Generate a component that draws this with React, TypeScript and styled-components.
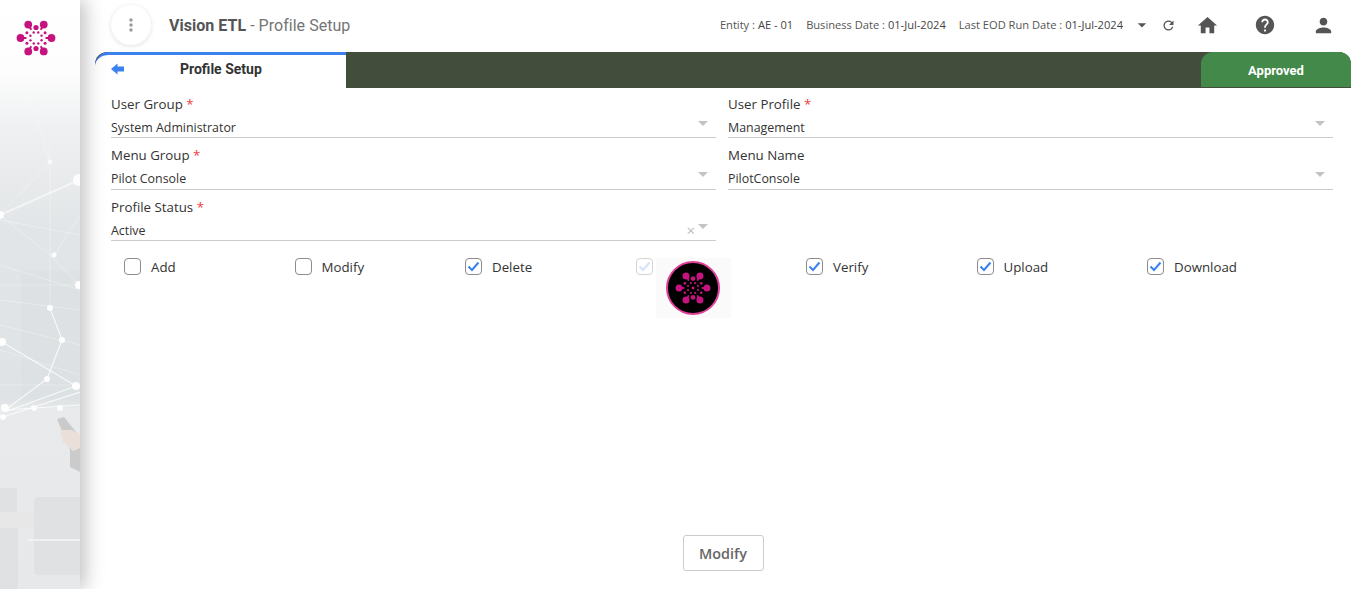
import React from 'react';
import styled, { createGlobalStyle } from 'styled-components';
import { MdHome, MdHelp, MdPerson, MdRefresh, MdMoreVert, MdArrowDropDown } from 'react-icons/md';

const GlobalStyle = createGlobalStyle`
  html, body {
    margin: 0;
    padding: 0;
    background: #fff;
    overflow: hidden;
  }
  * {
    box-sizing: border-box;
  }
`;

const Page = styled.div`
  display: flex;
  width: 1366px;
  height: 589px;
  padding-right: 15px;
  overflow: hidden;
`;

const Sidebar = styled.aside`
  position: relative;
  flex: 0 0 80px;
  height: 100%;
  background: linear-gradient(180deg, #fff 0, #fdfdfd 70px, #eef0f1 130px, #e2e5e7 230px, #dfe3e5 400px, #e8eaeb 410px, #e6e8e9 589px);
  box-shadow: 5px 0 18px rgba(0, 0, 0, 0.25);
  z-index: 2;
`;

const Main = styled.main`
  flex: 1;
  min-width: 0;
  display: flex;
  flex-direction: column;
  padding-left: 15px;
`;

const Header = styled.header`
  flex: 0 0 52px;
  display: flex;
  align-items: center;
  padding: 0 11px 2px 16px;
`;

const MenuButton = styled.button`
  width: 40px;
  height: 40px;
  border: none;
  border-radius: 50%;
  background: #fff;
  box-shadow: 0 1px 5px rgba(0, 0, 0, 0.12);
  color: #9a9a9a;
  display: flex;
  align-items: center;
  justify-content: center;
  padding: 0;
  margin-right: 18px;
`;

const Title = styled.div`
  font-family: Roboto, sans-serif;
  font-size: 16px;
  color: #757575;
  flex: 1;
  letter-spacing: 0.03px;
  b {
    font-weight: 700;
    color: #555;
  }
`;

const Info = styled.span`
  font-family: "Open Sans", sans-serif;
  font-size: 11.12px;
  color: #555;
  margin: 0 13px 2px 0;
  white-space: nowrap;
  b {
    font-weight: 500;
    color: #444;
  }
`;

const IconSlot = styled.span<{ $width: number }>`
  display: flex;
  justify-content: center;
  align-items: center;
  width: ${({ $width }) => $width}px;
  color: #555;
  svg {
    flex: none;
  }
`;

const TabBar = styled.div`
  flex: 0 0 36px;
  display: flex;
  justify-content: space-between;
  background: #434d3b;
  border-radius: 12px 12px 0 0;
`;

const ActiveTab = styled.div`
  width: 251px;
  height: 36px;
  background: #fff;
  border-top: 3px solid #3b82f0;
  border-radius: 14px 0 0 0;
  display: flex;
  align-items: center;
  padding: 0 0 5px 16px;
  font-family: Roboto, sans-serif;
  font-size: 14px;
  font-weight: 700;
  color: #333;
`;

const TabLabel = styled.span`
  margin-left: 56px;
`;

const StatusTab = styled.div`
  width: 150px;
  height: 35px;
  padding-top: 2px;
  background: #43894a;
  border-radius: 12px 12px 0 0;
  display: flex;
  align-items: center;
  justify-content: center;
  font-family: Roboto, sans-serif;
  font-size: 13px;
  font-weight: 700;
  color: #fff;
`;

const Content = styled.div`
  position: relative;
  flex: 1;
  display: flex;
  flex-direction: column;
  padding: 6.9px 18px 18px 16px;
`;

const FormGrid = styled.div`
  display: grid;
  grid-template-columns: 605px 605px;
  column-gap: 12px;
  row-gap: 1.5px;
`;

const Field = styled.div`
  height: 50px;
  font-family: "Open Sans", sans-serif;
`;

const FieldLabel = styled.div`
  font-size: 13.3px;
  line-height: 18px;
  color: #333;
  font-weight: 500;
`;

const Required = styled.span`
  color: #f03a3a;
`;

const SelectBox = styled.div`
  display: flex;
  align-items: center;
  height: 23.2px;
  margin-top: 2px;
  padding-top: 3px;
  border-bottom: 1px solid #ccc;
  font-size: 12.4px;
  color: #333;
`;

const SelectText = styled.span`
  flex: 1;
`;

const Clear = styled.span`
  font-size: 15px;
  line-height: 15px;
  color: #bbb;
  margin-right: 3px;
`;

const Caret = styled.span`
  width: 0;
  height: 0;
  margin: -8px 8px 0 0;
  border-left: 5px solid transparent;
  border-right: 5px solid transparent;
  border-top: 5px solid #c4c4c4;
`;

const CheckRow = styled.div`
  display: grid;
  grid-template-columns: repeat(7, 170.5px);
  padding: 9px 0 0 13px;
`;

const CheckItem = styled.label`
  display: flex;
  align-items: center;
  height: 20px;
  font-family: "Open Sans", sans-serif;
  font-size: 13.3px;
  color: #333;
  font-weight: 500;
`;

const Box = styled.span<{ $faded?: boolean }>`
  width: 17px;
  height: 17px;
  margin-right: 10px;
  border: 1px solid ${({ $faded }) => ($faded ? '#d4d4d4' : '#8c8c8c')};
  border-radius: 4px;
  color: ${({ $faded }) => ($faded ? '#d5e3f8' : '#3b82f0')};
  display: flex;
  align-items: center;
  justify-content: center;
`;

const Loader = styled.div`
  position: absolute;
  left: 561px;
  top: 170px;
  width: 75px;
  height: 60px;
  background: #fafafa;
  display: flex;
  align-items: center;
  justify-content: center;
`;

const LoaderDisc = styled.div`
  width: 54px;
  height: 54px;
  margin-right: 2px;
  border-radius: 50%;
  background: #000;
  border: 2px solid #e0409a;
  display: flex;
  align-items: center;
  justify-content: center;
`;

const Footer = styled.div`
  margin-top: auto;
  display: flex;
  justify-content: center;
  padding-left: 2px;
`;

const ActionButton = styled.button`
  width: 81px;
  height: 36px;
  background: #fff;
  border: 1px solid #ccc;
  border-radius: 3px;
  font-family: "Open Sans", sans-serif;
  font-size: 14.4px;
  font-weight: 600;
  color: #666;
`;

const LogoSlot = styled.div`
  position: absolute;
  left: 16px;
  top: 18px;
`;

const Backdrop = styled.svg`
  position: absolute;
  left: 0;
  top: 0;
`;

const polar = (deg: number, d: number) => {
  const r = (deg * Math.PI) / 180;
  return { x: 20 + d * Math.cos(r), y: 20 + d * Math.sin(r) };
};

const Burst: React.FC<{ size: number; color: string; hub?: boolean }> = ({ size, color, hub }) => (
  <svg width={size} height={size} viewBox="0 0 40 40">
    <g fill={color} stroke={color}>
      {[0, 60, 120, 180, 240, 300].map((a) => {
        const tip = polar(a, 15.5);
        const root = polar(a, 9.5);
        return (
          <g key={a}>
            <line x1={root.x} y1={root.y} x2={tip.x} y2={tip.y} strokeWidth={2} />
            <circle cx={tip.x} cy={tip.y} r={3.9} stroke="none" />
          </g>
        );
      })}
      {[90, 270].map((a) => {
        const p = polar(a, 10.5);
        return <circle key={a} cx={p.x} cy={p.y} r={2.6} stroke="none" />;
      })}
      {[30, 150, 210, 330].map((a) => {
        const p = polar(a, 10.5);
        return <circle key={a} cx={p.x} cy={p.y} r={1.5} stroke="none" />;
      })}
      {[0, 45, 90, 135, 180, 225, 270, 315].map((a) => {
        const p = polar(a + 22, 6);
        return <circle key={a} cx={p.x} cy={p.y} r={1.2} stroke="none" />;
      })}
      {hub && <circle cx={20} cy={20} r={1.6} stroke="none" />}
    </g>
  </svg>
);

const strongLinks: number[][] = [
  [0, 215, 79, 180], [2, 342, 76, 386], [76, 386, 5, 412],
  [62, 340, 47, 379], [47, 379, 5, 410], [50, 308, 62, 340], [5, 410, 80, 405], [3, 417, 80, 392],
];

const faintLinks: number[][] = [
  [28, 95, 50, 162], [50, 140, 50, 308], [50, 162, 0, 215], [54, 255, 80, 215], [0, 215, 50, 255], [50, 255, 79, 285],
  [0, 285, 79, 285], [0, 300, 80, 310], [0, 325, 80, 345], [0, 350, 80, 375],
  [0, 385, 80, 385], [0, 220, 80, 235], [0, 265, 80, 290],
];

const nodes: number[][] = [
  [50, 162, 2.5, 0.6], [79, 180, 6, 0.9], [0, 215, 4, 0.9], [54, 255, 2.5, 0.9], [79, 285, 4, 0.95], [50, 308, 3, 0.95],
  [62, 340, 3, 0.95], [2, 342, 4, 0.95], [47, 379, 3, 0.95], [76, 386, 4, 0.95], [5, 408, 4, 0.95], [3, 417, 3, 0.95],
  [34, 408, 3, 0.8], [60, 408, 3, 0.8],
];

// rough stand-in for the sidebar's background photo
const SidebarArt: React.FC = () => (
  <Backdrop width="80" height="589" viewBox="0 0 80 589">
    <rect x="21" y="271" width="59" height="128" fill="#d9dde0" opacity="0.45" />
    <path d="M57 419l7-2 16 20v35l-10-5v-17z" fill="#cbcbcb" />
    <path d="M60 430h12l8 5v13l-7 3-10-9z" fill="#ebdfda" />
    <rect x="0" y="488" width="17" height="24" rx="1" fill="#dfe1e2" />
    <rect x="0" y="512" width="34" height="16" fill="#e6e7e6" />
    <rect x="0" y="528" width="18" height="61" fill="#dfe1e2" />
    <rect x="34" y="497" width="60" height="78" rx="4" fill="#dfe1e2" />
    <rect x="28" y="539" width="52" height="2" fill="#f0f1f1" />
    {faintLinks.map(([x1, y1, x2, y2], i) => (
      <line key={i} x1={x1} y1={y1} x2={x2} y2={y2} stroke="#fff" strokeWidth={0.8} opacity={0.4} />
    ))}
    {strongLinks.map(([x1, y1, x2, y2], i) => (
      <line key={i} x1={x1} y1={y1} x2={x2} y2={y2} stroke="#fff" strokeWidth={i === 0 ? 2 : 1.2} opacity={i === 0 ? 0.55 : 0.8} />
    ))}
    {nodes.map(([cx, cy, r, o], i) => (
      <circle key={i} cx={cx} cy={cy} r={r} fill="#fff" opacity={o} />
    ))}
  </Backdrop>
);

const BackArrow: React.FC = () => (
  <svg width="13" height="12" viewBox="0 0 13 12">
    <path d="M0 6L6.5 0.5V3.5H13V8.5H6.5V11.5z" fill="#3b82f0" />
  </svg>
);

const CheckMark: React.FC = () => (
  <svg width="15" height="15" viewBox="0 0 15 15">
    <path d="M2.5 7.5l3.5 3.5 6.5-7.5" fill="none" stroke="currentColor" strokeWidth={2} />
  </svg>
);

const SelectField: React.FC<{ label: string; value: string; required?: boolean; clearable?: boolean }> = ({
  label,
  value,
  required,
  clearable,
}) => (
  <Field>
    <FieldLabel>
      {label} {required && <Required>*</Required>}
    </FieldLabel>
    <SelectBox>
      <SelectText>{value}</SelectText>
      {clearable && <Clear>×</Clear>}
      <Caret />
    </SelectBox>
  </Field>
);

// the fourth label sits under the loader in the picture, so it is left empty
const permissions = [
  { label: 'Add', checked: false },
  { label: 'Modify', checked: false },
  { label: 'Delete', checked: true },
  { label: '', checked: true, faded: true },
  { label: 'Verify', checked: true },
  { label: 'Upload', checked: true },
  { label: 'Download', checked: true },
];

const App: React.FC = () => (
  <Page>
    <GlobalStyle />
    <Sidebar>
      <SidebarArt />
      <LogoSlot>
        <Burst size={40} color="#c5137f" />
      </LogoSlot>
    </Sidebar>
    <Main>
      <Header>
        <MenuButton>
          <MdMoreVert size={20} />
        </MenuButton>
        <Title>
          <b>Vision ETL</b> - Profile Setup
        </Title>
        <Info>Entity : <b>AE - 01</b></Info>
        <Info>Business Date : <b>01-Jul-2024</b></Info>
        <Info>Last EOD Run Date : <b>01-Jul-2024</b></Info>
        <IconSlot $width={11}><MdArrowDropDown size={20} color="#555" /></IconSlot>
        <IconSlot $width={43}><MdRefresh size={15} /></IconSlot>
        <IconSlot $width={34}><MdHome size={23} /></IconSlot>
        <IconSlot $width={82}><MdHelp size={22} /></IconSlot>
        <IconSlot $width={34}><MdPerson size={23} /></IconSlot>
      </Header>
      <TabBar>
        <ActiveTab>
          <BackArrow />
          <TabLabel>Profile Setup</TabLabel>
        </ActiveTab>
        <StatusTab>Approved</StatusTab>
      </TabBar>
      <Content>
        <FormGrid>
          <SelectField label="User Group" value="System Administrator" required />
          <SelectField label="User Profile" value="Management" required />
          <SelectField label="Menu Group" value="Pilot Console" required />
          <SelectField label="Menu Name" value="PilotConsole" />
          <SelectField label="Profile Status" value="Active" required clearable />
        </FormGrid>
        <CheckRow>
          {permissions.map((p, i) => (
            <CheckItem key={i}>
              <Box $faded={p.faded}>{p.checked && <CheckMark />}</Box>
              {p.label}
            </CheckItem>
          ))}
        </CheckRow>
        <Loader>
          <LoaderDisc>
            <Burst size={36} color="#c5137f" hub />
          </LoaderDisc>
        </Loader>
        <Footer>
          <ActionButton>Modify</ActionButton>
        </Footer>
      </Content>
    </Main>
  </Page>
);

export default App;
